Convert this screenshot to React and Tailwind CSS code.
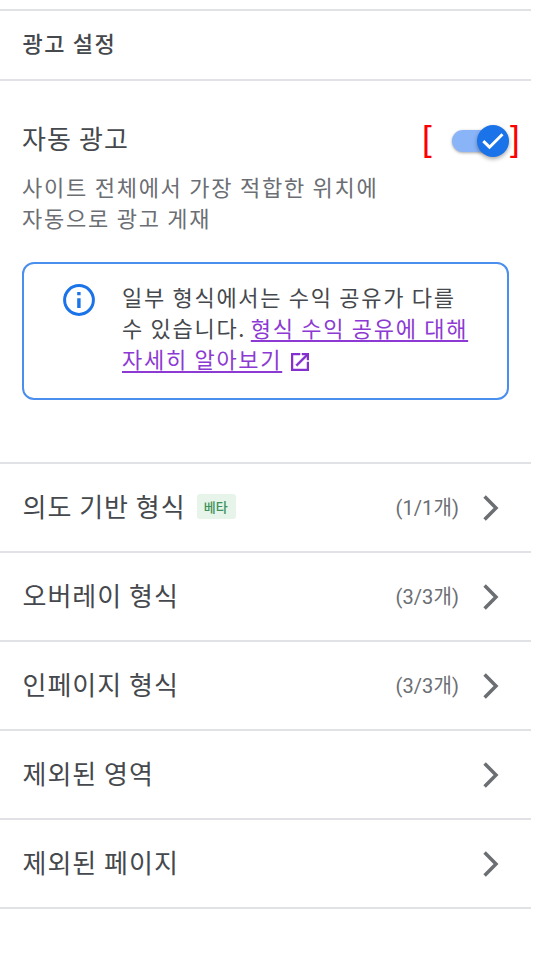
import { clsx } from 'clsx'

const formats = [
    { label: "의도 기반 형식", beta: true, count: "1/1" },
    { label: "오버레이 형식", count: "3/3" },
    { label: "인페이지 형식", count: "3/3" },
    { label: "제외된 영역" },
    { label: "제외된 페이지" },
]

const ChevronIcon = () => (
    <svg className="w-4 h-[26px] shrink-0" viewBox="0 0 16 26" fill="none" stroke="#6b6e73" strokeWidth="3.5">
        <path d="M1.6 1.6 13 13 1.6 24.4" />
    </svg>
)

const InfoIcon = () => (
    <svg className="size-8 mt-[1.5px] shrink-0" viewBox="0 0 32 32" fill="none">
        <circle cx="16" cy="16" r="14.4" stroke="#1a73e8" strokeWidth="3" />
        <path d="M14.2 8h3.4v3.2h-3.4zM14.2 14.2h3.4v9.8h-3.4z" fill="#1a73e8" />
    </svg>
)

const OpenInNewIcon = () => (
    <svg className="inline-block w-[18px] h-[18px] ml-[9px] align-[-3px]" viewBox="3 3 18 18" fill="#8430ce" stroke="#8430ce" strokeWidth="0.5">
        <path d="M19 19H5V5h7V3H3v18h18v-9h-2v7zM14 3v2h3.59l-9.83 9.83 1.41 1.41L19 6.41V10h2V3h-7z" />
    </svg>
)

const Toggle = () => (
    <button type="button" role="switch" aria-checked="true" aria-label="자동 광고" className="relative flex items-center w-[57px] h-8">
        <span className="block w-[54px] h-[22px] rounded-full bg-[#8ab4f8] shadow-[0_1px_3px_rgba(0,0,0,0.35)]" />
        <span className="absolute right-0 top-0 flex items-center justify-center size-8 rounded-full bg-[#1a73e8] shadow-[0_2px_4px_rgba(0,0,0,0.35)]">
            <svg className="w-[22px] h-[18px]" viewBox="0 0 22 18" fill="none" stroke="#fff" strokeWidth="3">
                <path d="M1.3 9.2 7.5 15.2 20.5 2.2" />
            </svg>
        </span>
    </button>
)

const Bracket = ({ children }) => (
    <span className="w-[9px] pb-[3px] text-[35px] leading-10 text-[#ff0000] font-['Liberation_Sans',sans-serif]">
        {children}
    </span>
)

const FormatRow = ({ label, beta, count }) => (
    <li className="flex items-center h-[89.1px] pl-[22.5px] pr-8 border-b-2 border-[#e1e2e6]">
        <span className="pb-1 text-[26px] leading-9 tracking-[1px] text-[#45484c]">{label}</span>
        {beta && (
            <span className="flex items-center justify-center w-[39px] h-[25px] mb-0.5 ml-[11.5px] pr-0.5 rounded-[3px] bg-[#e6f4ea] text-[13px] font-medium text-[#3c9259]">
                베타
            </span>
        )}
        {count && (
            <span className="ml-auto text-[20px] tracking-[0.1px] text-[#6b6e73] font-[Roboto,'Noto_Sans_CJK_KR',sans-serif]">
                ({count}개)
            </span>
        )}
        <span className={clsx(count ? "ml-6" : "ml-auto")}>
            <ChevronIcon />
        </span>
    </li>
)

const App = () => {
    return (
        <div className="min-h-[972px] bg-white pt-[9px] font-['Noto_Sans_CJK_KR',sans-serif]">
            <main className="w-[531px]">
                <header className="flex items-center h-[72px] px-[22.5px] border-y-2 border-[#e1e2e6]">
                    <h1 className="pb-[5px] text-[22px] font-medium tracking-[1.6px] text-[#45484c]">광고 설정</h1>
                </header>

                <section className="h-[383px] px-[22px] pt-[39px] border-b-2 border-[#e1e2e6]">
                    <div className="flex items-center justify-between h-10 -mr-2.5">
                        <h2 className="pb-1 text-[26px] leading-9 tracking-[1.1px] text-[#45484c]">자동 광고</h2>
                        <div className="flex items-center">
                            <Bracket>[</Bracket>
                            <span className="ml-[21px] mt-px mr-px">
                                <Toggle />
                            </span>
                            <Bracket>]</Bracket>
                        </div>
                    </div>
                    <p className="mt-[11px] text-[22px] leading-[31px] tracking-[1.75px] text-[#6b6e73]">
                        사이트 전체에서 가장 적합한 위치에
                        <br />
                        자동으로 광고 게재
                    </p>

                    <div className="flex h-[138px] mt-[29px] pl-[39px] pt-[18px] rounded-xl border-2 border-[#4a8fee]">
                        <InfoIcon />
                        <p className="-mt-px ml-[27px] text-[22px] leading-[31px] tracking-[1.7px] whitespace-nowrap text-[#45484c]">
                            일부 형식에서는 수익 공유가 다를
                            <br />
                            수 있습니다.{" "}
                            <a href="#" className="-ml-[2px] text-[#8c3ad3] underline decoration-2 underline-offset-[3px]">
                                형식 수익 공유에 대해
                                <br />
                                자세히 알아보기
                            </a>
                            <OpenInNewIcon />
                        </p>
                    </div>
                </section>

                <ul>
                    {formats.map((format) => (
                        <FormatRow key={format.label} {...format} />
                    ))}
                </ul>
            </main>
        </div>
    )
}

export default App
